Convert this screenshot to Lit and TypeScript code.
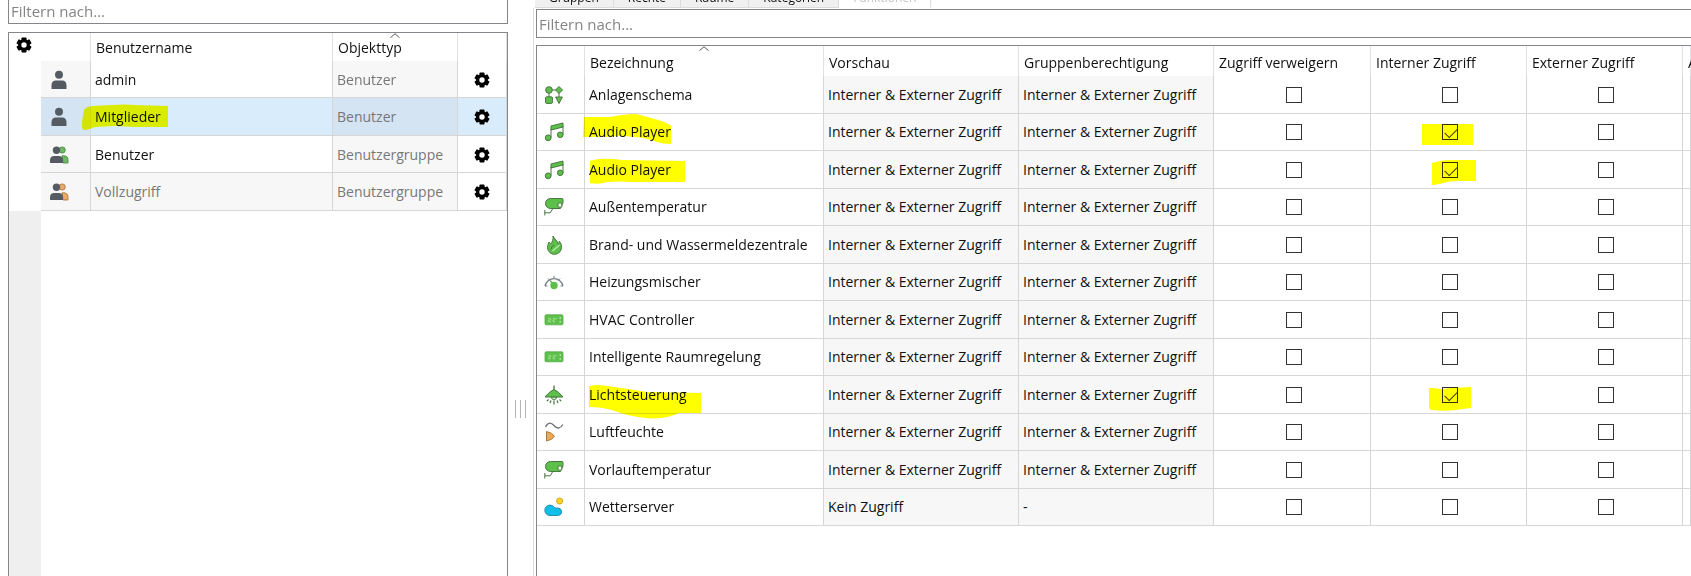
import { LitElement, html, css, svg, nothing, type TemplateResult } from "lit";
import { customElement } from "lit/decorators.js";
import { classMap } from "lit/directives/class-map.js";

const sharedStyles = css`
  * { box-sizing: border-box; }
  .filter {
    display: block;
    width: 100%;
    height: 29px;
    margin: 0;
    padding: 0 3px 0 2px;
    border: 1px solid #85858c;
    border-radius: 0;
    background: #fff;
    color: #111;
    font: inherit;
    font-size: 15px;
    outline: none;
  }
  .filter::placeholder { color: #858585; opacity: 1; }
  table { border-collapse: separate; border-spacing: 0; table-layout: fixed; }
  th {
    position: relative;
    padding: 1px 0 0 5px;
    border-right: 1px solid #e2e2e6;
    font-weight: 400;
    text-align: left;
    white-space: nowrap;
  }
  td {
    position: relative;
    padding: 0 0 0 4px;
    border-right: 1px solid #d6d6d6;
    border-bottom: 1px solid #d6d6d6;
    white-space: nowrap;
  }
  td.shade { background: #f7f7f7; }
  .sort {
    position: absolute;
    top: 0;
    left: 50%;
    width: 10px;
    height: 5px;
    margin-left: -5px;
  }
  .mark {
    position: absolute;
    top: 0;
    left: 0;
    width: 1px;
    height: 1px;
    overflow: visible;
    mix-blend-mode: multiply;
    pointer-events: none;
  }
  .icon { display: block; width: 20px; height: 20px; }
`;

const sortArrow = html`<svg class="sort" viewBox="0 0 10 5" aria-hidden="true">
  <path d="M.5 4.7 5 .7l4.5 4" fill="none" stroke="#555" />
</svg>`;

const mark = (d?: string) =>
  d ? html`<svg class="mark" aria-hidden="true"><path d=${d} fill="#ff0" /></svg>` : nothing;

const gear = html`<svg class="icon" viewBox="0 0 20 20" aria-hidden="true">
  <g fill="#000">
    <rect x="7.5" y="2.5" width="5" height="15" rx=".8" />
    <rect x="7.5" y="2.5" width="5" height="15" rx=".8" transform="rotate(60 10 10)" />
    <rect x="7.5" y="2.5" width="5" height="15" rx=".8" transform="rotate(120 10 10)" />
    <circle cx="10" cy="10" r="5.9" />
  </g>
  <circle cx="10" cy="10" r="2.7" fill="#fff" />
</svg>`;

const G = "#5cc04a";
const GD = "#48763f";

const frontPerson = svg`<g fill="#545b62">
  <circle cx="7.5" cy="5.2" r="3.7"/>
  <path d="M1 17.500v-2.300q0-4.300 4.300-4.300h4.400q4.300 0 4.300 4.300v2.300q0 .6-.6.6H1.600q-.6 0-.6-.6z"/>
</g>`;

const icons: Record<string, TemplateResult> = {
  user: svg`<g fill="#545b62"><circle cx="10" cy="4.8" r="4"/><path d="M2.5 18.4v-2.8Q2.5 10.600 7 10.600h6q4.500 0 4.500 5v2.800q0 .6-.6.6H3.100q-.6 0-.6-.6z"/></g>`,
  groupGreen: svg`<g fill="#6cba62" stroke="#4c8d45" stroke-width=".9"><circle cx="13.200" cy="5" r="3.100"/><path d="M13 10.800h1.500q4.500 0 4.500 4.200v3h-5z"/></g>${frontPerson}`,
  groupOrange: svg`<g fill="#eaa965" stroke="#b47b40" stroke-width=".9"><circle cx="13.200" cy="5" r="3.100"/><path d="M13 10.800h1.500q4.500 0 4.500 4.200v3h-5z"/></g>${frontPerson}`,
  schema: svg`<g fill=${G} stroke=${GD} stroke-width="1"><path d="M5 5h10M5 5v9M15 5v9"/><circle cx="5" cy="5" r="3.300"/><path d="M15 1.500 18.500 5 15 8.500 11.500 5z"/><rect x="1.600" y="11.800" width="6.800" height="6.600" rx="1"/><path d="M11.600 12h6.800L15 18.500z"/></g>`,
  music: svg`<g fill=${G} stroke=${GD} stroke-width="1"><path d="M7 4 19 1v4L7 8z"/><path d="M7 7v8.500M19 4v9" fill="none"/><circle cx="4.200" cy="15.800" r="2.900"/><circle cx="16.200" cy="12.800" r="2.800"/></g>`,
  camera: svg`<g stroke=${GD} stroke-width="1"><path d="M.8 13v5.500M.8 15.800h5.500L8.500 12" fill="none"/><path d="M6.500 1.500H18q1 0 1 1v3.300l-2.500 5.700h-10a5 5 0 0 1 0-10z" fill=${G}/><rect x="14" y="6" width="3.800" height="4.200" rx=".8" fill="#eefbea"/></g>`,
  fire: svg`<path d="M9 1c1 3 5 5 5 8 1-.6 1.300-1.600 1.200-2.800 2 2 2.300 4 2.300 6a7 7 0 0 1-14 .3C3.500 10 4.500 8.500 5 7c.6 1 1 1.600 1.700 2C8.500 7 9.500 4 9 1z" fill=${G} stroke=${GD} stroke-width="1"/><path d="M8.500 16l7-6" stroke="#b5e8a8" stroke-width="1.500" fill="none"/><path d="M7 14.500q0-3 3-4.500" stroke=${GD} fill="none"/>`,
  gauge: svg`<path d="M1 14A9.200 9.200 0 0 1 19 14" fill="none" stroke="#777d86" stroke-width="1.300"/><path d="M1 14h2.500M16.500 14H19M4 6.500l1.800 2M10 3.800v2.500M16 6.500l-1.800 2" stroke="#777d86"/><circle cx="10" cy="13.500" r="3.700" fill=${G}/><path d="M6.200 8.800 9 12" stroke=${G} stroke-width="1.500"/>`,
  display: svg`<rect x="1" y="4.800" width="18" height="10" rx="1.200" fill=${G} stroke="#56ab48" stroke-width=".8"/><path d="M4.200 8.300h2.500v1.700H4.500v1.800h2.700M8.800 8.300h2.200v1.700H9v1.800h2.200M12.200 8.300h1" fill="none" stroke="#a9e29a" stroke-width=".8"/><path d="M15.500 8h1.500M15.500 11.800h1.500" stroke="#c9f2be" stroke-width="1.300"/>`,
  lamp: svg`<path d="M10 .5v4.500" stroke=${GD} stroke-width="1.300"/><path d="M4.500 14.500 2.800 16.200M7 15.500l-1 2.500M10 15.500v4M13 15.500l1 2.500M15.500 14.500l1.700 1.700" stroke=${GD} stroke-width="1.200"/><path d="M7.200 12h5.600q-.5 2.800-2.800 2.800T7.200 12z" fill="#d9f3d3" stroke=${GD} stroke-width=".9"/><path d="M10 4.500q4 1.500 9 7.500H1Q6 6 10 4.500z" fill=${G} stroke=${GD} stroke-linejoin="round"/>`,
  humidity: svg`<path d="M1.500 5C4 0 7 0 10 3.500s6 3.500 9-1" fill="none" stroke="#6b7078" stroke-width="1.300"/><path d="M2.500 9.500q5.500 1 8 4.800-2.500 3.700-8 4.700z" fill="#e9aa55" stroke="#a87b3f" stroke-linejoin="round"/>`,
  weather: svg`<circle cx="15.600" cy="4" r="3.100" fill="#ffd21f" stroke="#c9a21a" stroke-width=".8"/><path d="M6 18.500a5.200 5.200 0 0 1 0-10.400q2.800 0 4.300 2.300 1.500 1.200 4 .6a3.800 3.800 0 0 1 .2 7.500z" fill="#10bfe8" stroke="#1d87a4" stroke-width=".9"/>`,
};

const icon = (name: string) =>
  html`<svg class="icon" viewBox="0 0 20 20" aria-hidden="true">${icons[name]}</svg>`;

interface User { icon: string; name: string; type: string; selected?: boolean; builtIn?: boolean; mark?: string; }

const users: User[] = [
  { icon: "user", name: "admin", type: "Benutzer" },
  {
    icon: "user", name: "Mitglieder", type: "Benutzer", selected: true,
    mark: "M-7 12q1-3 8-4l20-1q14-1 22 0l34 1v21l-33 0-20-1-20 1q-7 3-11 3t0-20z",
  },
  { icon: "groupGreen", name: "Benutzer", type: "Benutzergruppe" },
  { icon: "groupOrange", name: "Vollzugriff", type: "Benutzergruppe", builtIn: true },
];

@customElement("user-panel")
export class UserPanel extends LitElement {
  static styles = [sharedStyles, css`
    :host { display: flex; flex-direction: column; gap: 8px; min-width: 0; }
    .filter.clipped { height: 24px; border-top: 0; padding-bottom: 1px; }
    .box { flex: 1; display: flex; border: 1px solid #85858c; border-bottom: 0; }
    .rail { width: 32px; display: flex; flex-direction: column; background: #efefef; }
    .corner { height: 178px; padding: 2px 0 0 5px; background: #fff; }
    .tool { display: block; margin: 0; padding: 0; border: 0; background: none; }
    table { flex: 1; width: 0; align-self: flex-start; }
    .c-icon { width: 50px; }
    .c-type { width: 125px; }
    .c-tool { width: 49px; }
    thead tr { height: 28px; }
    tbody tr { height: 37px; }
    tbody tr:nth-child(even) { height: 38px; }
    td { padding-top: 1px; }
    td.pic { padding-left: 8px; }
    td.gear { padding-left: 14px; }
    .dim { color: #777; }
    tr.selected td { background: #d9ecfb; }
    tr.selected td.shade { background: #d4e4f3; }
  `];

  render() {
    return html`
      <input class="filter clipped" type="text" placeholder="Filtern nach..." aria-label="Benutzer filtern" />
      <div class="box">
        <div class="rail">
          <div class="corner"><button class="tool" aria-label="Einstellungen">${gear}</button></div>
        </div>
        <table>
          <colgroup><col class="c-icon" /><col /><col class="c-type" /><col class="c-tool" /></colgroup>
          <thead><tr><th></th><th>Benutzername</th><th>Objekttyp${sortArrow}</th><th></th></tr></thead>
          <tbody>
            ${users.map((u) => html`
              <tr class=${classMap({ selected: !!u.selected })}>
                <td class="pic shade">${icon(u.icon)}</td>
                <td class=${classMap({ shade: !!u.builtIn, dim: !!u.builtIn })}>${u.name}${mark(u.mark)}</td>
                <td class="shade dim">${u.type}</td>
                <td class="gear"><button class="tool" aria-label="${u.name} bearbeiten">${gear}</button></td>
              </tr>`)}
          </tbody>
        </table>
      </div>`;
  }
}

interface Func { icon: string; name: string; preview?: string; group?: string; internal?: boolean; mark?: string; checkMark?: string; }

const full = "Interner & Externer Zugriff";

const functions: Func[] = [
  { icon: "schema", name: "Anlagenschema" },
  {
    icon: "music", name: "Audio Player", internal: true,
    mark: "M-1 3l26 0q14-3 26-3l15 4q16 4 20 8v18q-8 0-14-2-14-5-24-5-14-2-24 0l-26 0z",
    checkMark: "M51 10h51v21h-51z",
  },
  {
    icon: "music", name: "Audio Player", internal: true,
    mark: "M5 10l8-2q12-1 24 1l63 1v21h-54q-12-1-24 0-8 3-17 1z",
    checkMark: "M61 12l8-2q4-1 10-1h26v21h-18q-10 0-18 3l-8 1z",
  },
  { icon: "camera", name: "Außentemperatur" },
  { icon: "fire", name: "Brand- und Wassermeldezentrale" },
  { icon: "gauge", name: "Heizungsmischer" },
  { icon: "display", name: "HVAC Controller" },
  { icon: "display", name: "Intelligente Raumregelung" },
  {
    icon: "lamp", name: "Lichtsteuerung", internal: true,
    mark: "M4 10q8-2 18 0 22 3 40 6l54 1v20h-22q-14 7-34 5-18-2-30-7-12-4-26-4z",
    checkMark: "M58 12l6 0q6 2 14 0l22-1v21l-8 1q-14 3-32 1l-2-2z",
  },
  { icon: "humidity", name: "Luftfeuchte" },
  { icon: "camera", name: "Vorlauftemperatur" },
  { icon: "weather", name: "Wetterserver", preview: "Kein Zugriff", group: "-" },
];

@customElement("function-panel")
export class FunctionPanel extends LitElement {
  static styles = [sharedStyles, css`
    :host { display: flex; flex-direction: column; min-width: 0; overflow: hidden; }
    .tabs { display: flex; align-items: flex-end; height: 8px; padding-left: 2px; overflow: hidden; }
    .tab {
      flex: none;
      margin: 0;
      padding: 6px 14px 0;
      border: 1px solid #dcdcdc;
      border-left: 0;
      background: #f0f0f0;
      color: #111;
      font: inherit;
      font-size: 12px;
      line-height: 18px;
    }
    .tab.active { background: #fff; border-bottom-color: #fff; color: #c4c4c4; }
    .page {
      flex: 1;
      display: flex;
      flex-direction: column;
      gap: 7px;
      padding: 1px 0 0 2px;
      border-left: 1px solid #dcdce2;
    }
    .filter { border-right: 0; flex: none; }
    .box { flex: 1; border: 1px solid #85858c; border-width: 1px 0 0 1px; overflow: hidden; }
    table { width: 100%; min-width: 1150px; }
    .c-icon { width: 48px; }
    .c-name { width: 239px; }
    .c-text { width: 195px; }
    .c-deny { width: 157px; }
    .c-check { width: 156px; }
    thead tr { height: 30px; }
    th { padding-top: 3px; }
    tbody tr { height: 38px; }
    tbody tr:nth-child(even) { height: 37px; }
    td.pic { padding-left: 7px; }
    td.check { padding: 0 0 0 3px; text-align: center; }
    .tick {
      appearance: none;
      display: block;
      width: 16px;
      height: 16px;
      margin: 0 auto;
      border: 1px solid #333;
      border-radius: 0;
      background: #fff;
    }
    .tick:checked::before {
      content: "";
      display: block;
      width: 11px;
      height: 6px;
      margin: 3px 0 0 2px;
      border: solid #444;
      border-width: 0 0 1px 1px;
      transform: rotate(-45deg);
    }
  `];

  private check(label: string, f: Func, checked = false, d?: string) {
    return html`<td class="check"><input class="tick" type="checkbox" aria-label="${f.name}: ${label}" .checked=${checked} />${mark(d)}</td>`;
  }

  render() {
    const tabs = ["Gruppen", "Rechte", "Räume", "Kategorien", "Funktionen"];
    return html`
      <div class="tabs" role="tablist">
        ${tabs.map((t, i) => html`<button role="tab" class=${classMap({ tab: true, active: i === 4 })} aria-selected=${i === 4}>${t}</button>`)}
      </div>
      <div class="page">
        <input class="filter" type="text" placeholder="Filtern nach..." aria-label="Funktionen filtern" />
        <div class="box">
          <table>
            <colgroup>
              <col class="c-icon" /><col class="c-name" /><col class="c-text" /><col class="c-text" />
              <col class="c-deny" /><col class="c-check" /><col class="c-check" /><col />
            </colgroup>
            <thead><tr>
              <th></th><th>Bezeichnung${sortArrow}</th><th>Vorschau</th><th>Gruppenberechtigung</th>
              <th>Zugriff verweigern</th><th>Interner Zugriff</th><th>Externer Zugriff</th><th>A</th>
            </tr></thead>
            <tbody>
              ${functions.map((f) => html`<tr>
                <td class="pic">${icon(f.icon)}</td>
                <td>${f.name}${mark(f.mark)}</td>
                <td class="shade">${f.preview ?? full}</td>
                <td class="shade">${f.group ?? full}</td>
                ${this.check("Zugriff verweigern", f)}
                ${this.check("Interner Zugriff", f, f.internal, f.checkMark)}
                ${this.check("Externer Zugriff", f)}
                <td></td>
              </tr>`)}
            </tbody>
          </table>
        </div>
      </div>`;
  }
}

@customElement("app-root")
export class AppRoot extends LitElement {
  static styles = css`
    * { box-sizing: border-box; }
    :host {
      display: flex;
      height: 100vh;
      overflow: hidden;
      padding-left: 8px;
      background: #fff;
      color: #111;
      font: 14px/20px "Open Sans", "Noto Sans", sans-serif;
    }
    user-panel { flex: 0 0 500px; }
    .splitter { flex: 0 0 25px; display: flex; justify-content: center; padding-top: 400px; gap: 4px; }
    .grip { width: 1px; height: 18px; background: #b4b4b4; }
    function-panel { flex: 1; }
  `;

  render() {
    return html`
      <user-panel></user-panel>
      <div class="splitter" role="separator" aria-orientation="vertical">
        <span class="grip"></span><span class="grip"></span><span class="grip"></span>
      </div>
      <function-panel></function-panel>`;
  }
}
